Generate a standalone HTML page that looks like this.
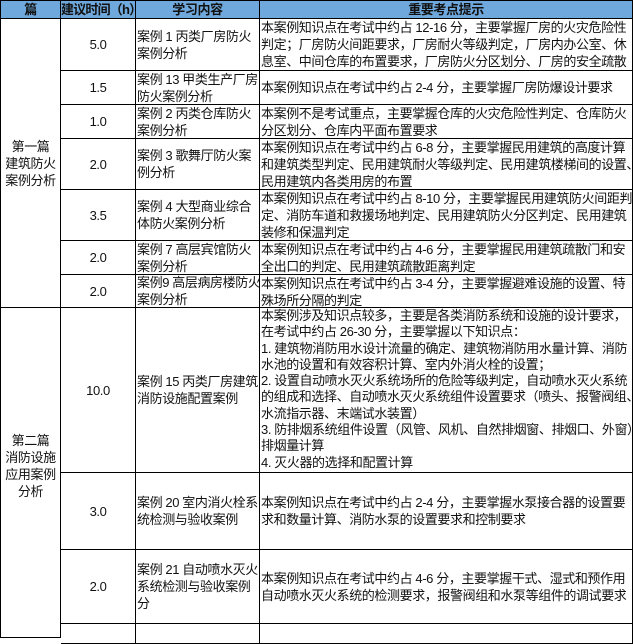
<!DOCTYPE html>
<html><head><meta charset="utf-8"><style>
body{margin:0;width:633px;height:625px;overflow:hidden;background:#fff;font-family:"Liberation Sans","Noto Sans CJK SC",sans-serif;font-size:13px;color:#111}
.c{position:absolute;border-right:1px solid #000;border-bottom:1px solid #000;box-sizing:border-box;line-height:17px;overflow:hidden;white-space:nowrap;letter-spacing:-0.4px}
.h{background:#6fa8dc;font-weight:bold;text-align:center;line-height:17px;border-top:1px solid #000}
.m{display:flex;align-items:center;justify-content:center;text-align:center}
.l{display:flex;align-items:center;padding-left:1px}
.t{padding-left:1px}
</style></head><body>
<div class="c h" style="left:0;top:0;width:61px;height:19px;border-left:1px solid #000">篇</div>
<div class="c h" style="left:61px;top:0;width:75px;height:19px;letter-spacing:-0.8px">建议时间（h）</div>
<div class="c h" style="left:136px;top:0;width:124px;height:19px">学习内容</div>
<div class="c h" style="left:260px;top:0;width:373px;height:19px">重要考点提示</div>

<div class="c m" style="left:0;top:19px;width:61px;height:289px;border-left:1px solid #000">第一篇<br>建筑防火<br>案例分析</div>
<div class="c m" style="left:0;top:308px;width:61px;height:330px;border-left:1px solid #000;padding-bottom:14px">第二篇<br>消防设施<br>应用案例<br>分析</div>

<div class="c m" style="left:61px;top:19px;width:75px;height:52px">5.0</div>
<div class="c l" style="left:136px;top:19px;width:124px;height:52px"><div>案例 1 丙类厂房防火<br>案例分析</div></div>
<div class="c t" style="left:260px;top:19px;width:373px;height:52px">本案例知识点在考试中约占 12-16 分，主要掌握厂房的火灾危险性<br>判定；厂房防火间距要求，厂房耐火等级判定，厂房内办公室、休<br>息室、中间仓库的布置要求，厂房防火分区划分、厂房的安全疏散</div>

<div class="c m" style="left:61px;top:71px;width:75px;height:34px">1.5</div>
<div class="c l" style="left:136px;top:71px;width:124px;height:34px"><div>案例 13 甲类生产厂房<br>防火案例分析</div></div>
<div class="c l" style="left:260px;top:71px;width:373px;height:34px">本案例知识点在考试中约占 2-4 分，主要掌握厂房防爆设计要求</div>

<div class="c m" style="left:61px;top:105px;width:75px;height:34px">1.0</div>
<div class="c l" style="left:136px;top:105px;width:124px;height:34px"><div>案例 2 丙类仓库防火<br>案例分析</div></div>
<div class="c t" style="left:260px;top:105px;width:373px;height:34px">本案例不是考试重点，主要掌握仓库的火灾危险性判定、仓库防火<br>分区划分、仓库内平面布置要求</div>

<div class="c m" style="left:61px;top:139px;width:75px;height:51px">2.0</div>
<div class="c l" style="left:136px;top:139px;width:124px;height:51px"><div>案例 3 歌舞厅防火案<br>例分析</div></div>
<div class="c t" style="left:260px;top:139px;width:373px;height:51px">本案例知识点在考试中约占 6-8 分，主要掌握民用建筑的高度计算<br>和建筑类型判定、民用建筑耐火等级判定、民用建筑楼梯间的设置、<br>民用建筑内各类用房的布置</div>

<div class="c m" style="left:61px;top:190px;width:75px;height:51px">3.5</div>
<div class="c l" style="left:136px;top:190px;width:124px;height:51px"><div>案例 4 大型商业综合<br>体防火案例分析</div></div>
<div class="c t" style="left:260px;top:190px;width:373px;height:51px">本案例知识点在考试中约占 8-10 分，主要掌握民用建筑防火间距判<br>定、消防车道和救援场地判定、民用建筑防火分区判定、民用建筑<br>装修和保温判定</div>

<div class="c m" style="left:61px;top:241px;width:75px;height:34px">2.0</div>
<div class="c l" style="left:136px;top:241px;width:124px;height:34px"><div>案例 7 高层宾馆防火<br>案例分析</div></div>
<div class="c t" style="left:260px;top:241px;width:373px;height:34px">本案例知识点在考试中约占 4-6 分，主要掌握民用建筑疏散门和安<br>全出口的判定、民用建筑疏散距离判定</div>

<div class="c m" style="left:61px;top:275px;width:75px;height:33px">2.0</div>
<div class="c l" style="left:136px;top:275px;width:124px;height:33px"><div>案例9 高层病房楼防火<br>案例分析</div></div>
<div class="c t" style="left:260px;top:275px;width:373px;height:33px">本案例知识点在考试中约占 3-4 分，主要掌握避难设施的设置、特<br>殊场所分隔的判定</div>

<div class="c m" style="left:61px;top:308px;width:75px;height:165px">10.0</div>
<div class="c l" style="left:136px;top:308px;width:124px;height:165px"><div>案例 15 丙类厂房建筑<br>消防设施配置案例</div></div>
<div class="c t" style="left:260px;top:308px;width:373px;height:165px;line-height:16.3px">本案例涉及知识点较多，主要是各类消防系统和设施的设计要求，<br>在考试中约占 26-30 分，主要掌握以下知识点：<br>1. 建筑物消防用水设计流量的确定、建筑物消防用水量计算、消防<br>水池的设置和有效容积计算、室内外消火栓的设置；<br>2. 设置自动喷水灭火系统场所的危险等级判定，自动喷水灭火系统<br>的组成和选择、自动喷水灭火系统组件设置要求（喷头、报警阀组、<br>水流指示器、末端试水装置）<br>3. 防排烟系统组件设置（风管、风机、自然排烟窗、排烟口、外窗）、<br>排烟量计算<br>4. 灭火器的选择和配置计算</div>

<div class="c m" style="left:61px;top:473px;width:75px;height:77px">3.0</div>
<div class="c l" style="left:136px;top:473px;width:124px;height:77px"><div>案例 20 室内消火栓系<br>统检测与验收案例</div></div>
<div class="c l" style="left:260px;top:473px;width:373px;height:77px"><div>本案例知识点在考试中约占 2-4 分，主要掌握水泵接合器的设置要<br>求和数量计算、消防水泵的设置要求和控制要求</div></div>

<div class="c m" style="left:61px;top:550px;width:75px;height:74px">2.0</div>
<div class="c l" style="left:136px;top:550px;width:124px;height:74px"><div>案例 21 自动喷水灭火<br>系统检测与验收案例<br>分</div></div>
<div class="c l" style="left:260px;top:550px;width:373px;height:74px"><div>本案例知识点在考试中约占 4-6 分，主要掌握干式、湿式和预作用<br>自动喷水灭火系统的检测要求，报警阀组和水泵等组件的调试要求</div></div>
<div class="c" style="left:61px;top:624px;width:75px;height:20px"></div>
<div class="c" style="left:136px;top:624px;width:124px;height:20px"></div>
<div class="c" style="left:260px;top:624px;width:373px;height:20px"></div>
</body></html>
